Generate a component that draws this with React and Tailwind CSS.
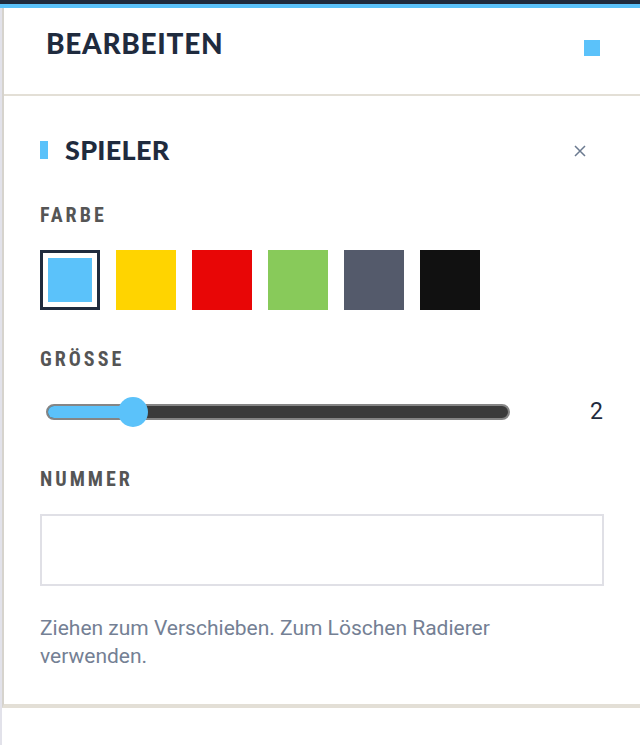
import React, { useState } from 'react';

const COLORS = ['#5bc2fa', '#ffd400', '#e80606', '#88ca5a', '#545a6b', '#111111'];

const headFont = { fontFamily: 'Lato, "DejaVu Sans", sans-serif' };

const Label = ({ children }) => (
  <div className="font-['Roboto_Condensed',Roboto,sans-serif] font-bold text-[20px] leading-none tracking-[0.15em] text-[#555555] uppercase">
    {children}
  </div>
);

const App = () => {
  const [color, setColor] = useState(0);
  const [size] = useState(2);
  const pct = 18.5;

  return (
    <div className="w-[640px] h-[745px] bg-white flex flex-col overflow-hidden">
      <div className="h-[4px] bg-[#1f2b3e]" />
      <div className="h-[4px] bg-[#5bc2fa]" />
      <div className="flex-1 border-l-2 border-[#e2e2ea]">
        <div className="border-l-2 border-[#d6d3cd] border-b-4 border-b-[#e3dfd6]">
          {/* Kopfzeile */}
          <div className="h-[88px] border-b-2 border-[#e3dfd6] flex items-start justify-between pl-[42px] pr-[40px] pt-[21px]">
            <h1 style={headFont} className="font-black text-[28px] leading-none tracking-[0.025em] text-[#1f2b3e]">
              BEARBEITEN
            </h1>
            <div className="w-4 h-4 bg-[#5bc2fa] mt-[11px]" />
          </div>

          <div className="pl-[36px] pr-[36px] pt-[40px] pb-[34px]">
            {/* Spieler */}
            <div className="flex items-center justify-between">
              <div className="flex items-center">
                <span className="w-2 h-[18px] bg-[#5bc2fa] mr-[17px]" />
                <h2 style={headFont} className="font-black text-[27px] leading-none tracking-[0.01em] text-[#1f2b3e]">
                  SPIELER
                </h2>
              </div>
              <button className="mr-[18px] mt-[2px] text-[#6b7a90]">
                <svg width="12" height="12" viewBox="0 0 12 12" fill="none" stroke="currentColor" strokeWidth="1.5">
                  <path d="M1 1L11 11M11 1L1 11" />
                </svg>
              </button>
            </div>

            {/* Farbe */}
            <div className="mt-[42px]">
              <Label>Farbe</Label>
              <div className="flex gap-4 mt-[25px]">
                {COLORS.map((c, i) => (
                  <button
                    key={c}
                    onClick={() => setColor(i)}
                    className={
                      i === color
                        ? 'w-[60px] h-[60px] border-[3px] border-[#1f2b3e] p-[5px] bg-white'
                        : 'w-[60px] h-[60px]'
                    }
                    style={i === color ? undefined : { backgroundColor: c }}
                  >
                    {i === color && <div className="w-full h-full" style={{ backgroundColor: c }} />}
                  </button>
                ))}
              </div>
            </div>

            {/* Grösse */}
            <div className="mt-[39px]">
              <Label>Grösse</Label>
              <div className="flex items-center justify-between mt-[31px]">
                <div className="relative w-[464px] ml-[6px] h-[16px] rounded-full border-2 border-[#858585] bg-[#3b3b3b]">
                  <div className="h-full rounded-full bg-[#5bc2fa]" style={{ width: `${pct}%` }} />
                  <div
                    className="absolute top-1/2 -translate-y-1/2 -translate-x-1/2 w-[30px] h-[30px] rounded-full bg-[#5bc2fa]"
                    style={{ left: `${pct}%` }}
                  />
                </div>
                <span className="font-['Roboto',sans-serif] text-[23px] leading-none text-[#1f2b3e] mr-[1px]">{size}</span>
              </div>
            </div>

            {/* Nummer */}
            <div className="mt-[46px]">
              <Label>Nummer</Label>
              <input
                type="text"
                className="block w-full h-[72px] mt-[25px] border-2 border-[#e0e0e6] outline-none px-3 text-lg"
              />
            </div>

            <p className="mt-[28px] max-w-[520px] font-['Roboto',sans-serif] text-[21px] leading-[28px] text-[#748094]">
              Ziehen zum Verschieben. Zum Löschen Radierer verwenden.
            </p>
          </div>
        </div>
      </div>
    </div>
  );
};

export default App;
